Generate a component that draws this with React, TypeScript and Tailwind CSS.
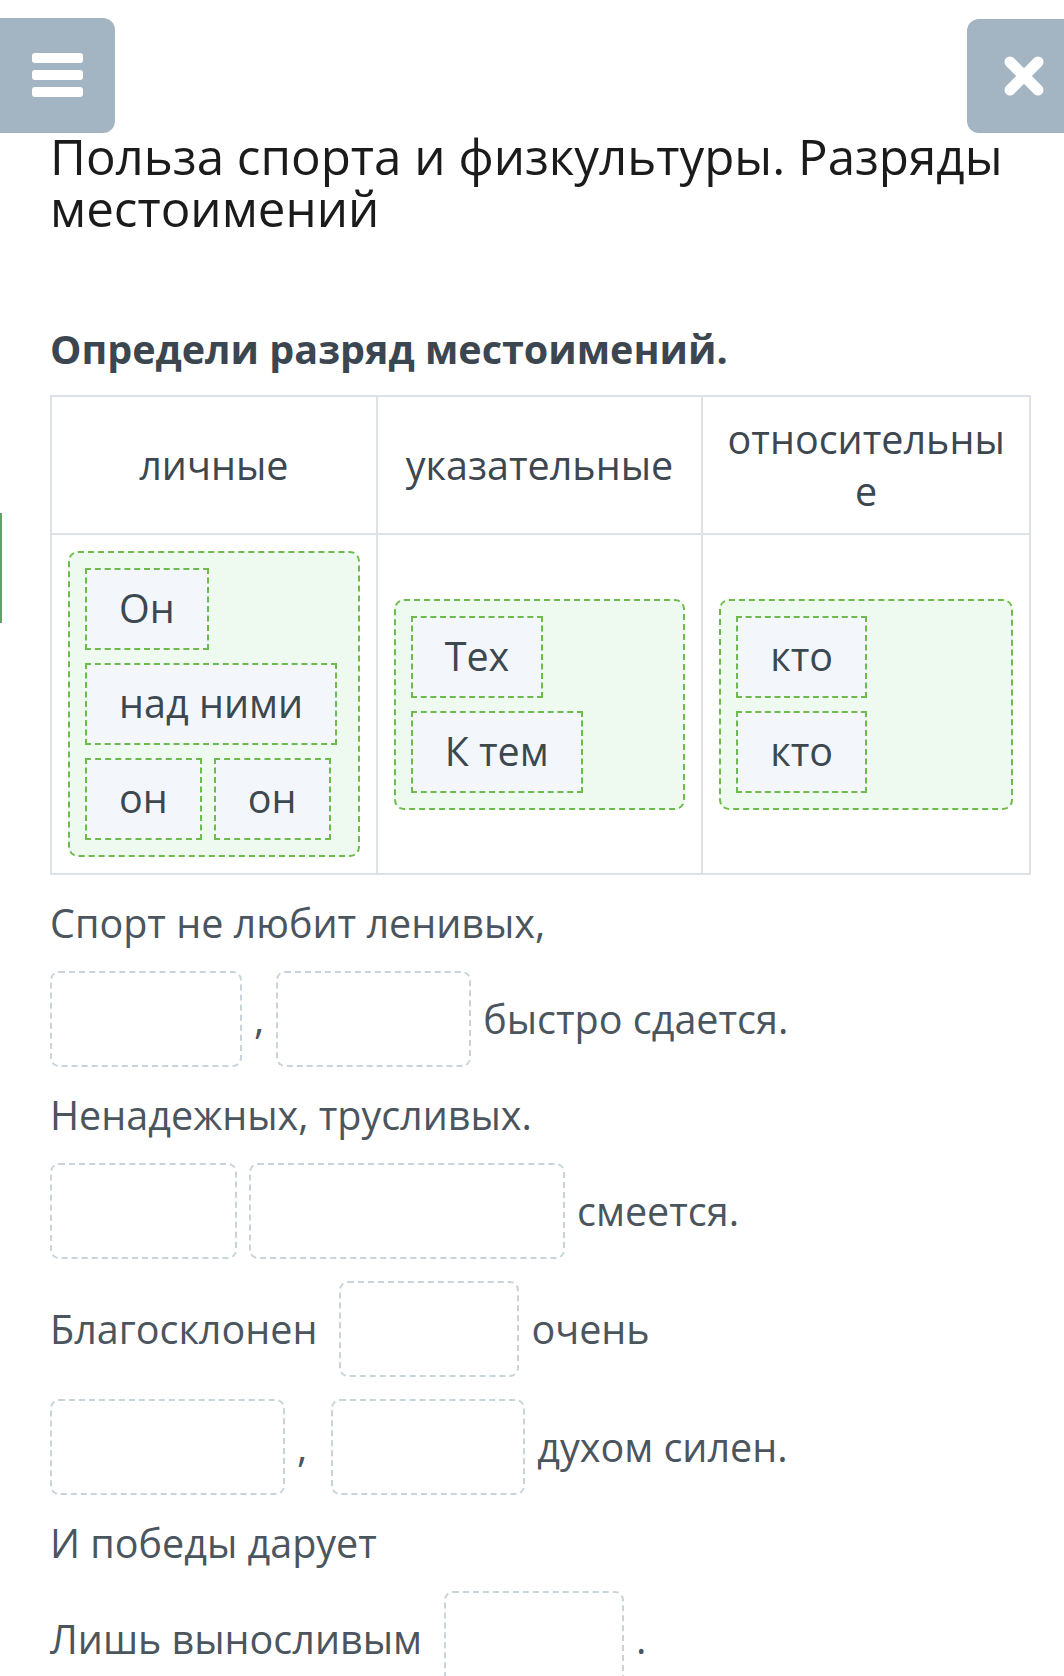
import React from 'react';

const Drop = ({ w }: { w: string }) => (
  <div className={`${w} h-[96px] shrink-0 rounded-[9px] border-2 border-dashed border-[#c8d4da] bg-white`} />
);

const Chip = ({ children }: { children: React.ReactNode }) => (
  <div className="flex h-[82px] items-center border-2 border-dashed border-[#6dbb4b] bg-[#f3f7fc] px-[32px] text-[39.5px] leading-none text-[#3d4750]">
    {children}
  </div>
);

const Group = ({ words }: { words: string[] }) => (
  <div className="flex w-full flex-wrap content-start gap-x-3 gap-y-[13px] rounded-[10px] border-2 border-dashed border-[#6dbb4b] bg-[#eef9ef] p-[15px]">
    {words.map((w, i) => (
      <Chip key={i}>{w}</Chip>
    ))}
  </div>
);

export default function App() {
  return (
    <div className="relative min-h-[1676px] w-full overflow-hidden bg-white font-['Open_Sans',sans-serif]">
      {/* floating buttons */}
      <button className="absolute left-0 top-[18px] flex h-[115px] w-[115px] items-start rounded-r-[12px] bg-[#a3b5c2] pl-[32px] pt-[35px]">
        <svg width="51" height="44" viewBox="0 0 51 44">
          <rect x="0" y="0" width="51" height="10" rx="3" fill="#fff" />
          <rect x="0" y="17" width="51" height="10" rx="3" fill="#fff" />
          <rect x="0" y="34" width="51" height="10" rx="3" fill="#fff" />
        </svg>
      </button>
      <button className="absolute right-0 top-[19px] flex h-[114px] w-[97px] items-start rounded-l-[12px] bg-[#a3b5c2] pl-[36px] pt-[36px]">
        <svg width="42" height="42" viewBox="0 0 42 42">
          <path d="M7 7 L35 35 M35 7 L7 35" stroke="#fff" strokeWidth="11" strokeLinecap="round" />
        </svg>
      </button>
      <div className="absolute left-0 top-[513px] h-[110px] w-[2px] bg-[#5aa56a]" />

      <div className="pl-[50px] pr-[33px] pt-[130px]">
        <h1 className="text-[49.3px] font-normal leading-[52px] text-[#1b1b1b]">
          Польза спорта и физкультуры. Разряды местоимений
        </h1>

        <h2 className="mt-[89px] text-[39.5px] font-bold leading-[52px] text-[#3c4650]">
          Определи разряд местоимений.
        </h2>

        {/* table */}
        <div className="mt-[20px] grid grid-cols-3 border-2 border-[#dce2e5] text-[#3d4750]">
          <div className="flex h-[138px] items-center justify-center border-b-2 border-r-2 border-[#dce2e5] text-center text-[39.5px] leading-[52px]">
            личные
          </div>
          <div className="flex h-[138px] items-center justify-center border-b-2 border-r-2 border-[#dce2e5] text-center text-[39.5px] leading-[52px]">
            указательные
          </div>
          <div className="flex h-[138px] items-center justify-center border-b-2 border-[#dce2e5] text-center text-[39.5px] leading-[52px]">
            относительны
            <br />е
          </div>
          <div className="flex items-center border-r-2 border-[#dce2e5] p-[16px]">
            <Group words={['Он', 'над ними', 'он', 'он']} />
          </div>
          <div className="flex items-center border-r-2 border-[#dce2e5] p-[16px]">
            <Group words={['Тех', 'К тем']} />
          </div>
          <div className="flex items-center p-[16px]">
            <Group words={['кто', 'кто']} />
          </div>
        </div>

        {/* poem with drop zones */}
        <div className="mt-[22px] flex flex-col gap-[22px] text-[39.5px] leading-[52px] text-[#4b555e]">
          <div>Спорт не любит ленивых,</div>
          <div className="flex items-center gap-x-3">
            <Drop w="w-[192px]" />
            <span>,</span>
            <Drop w="w-[195px]" />
            <span>быстро сдается.</span>
          </div>
          <div>Ненадежных, трусливых.</div>
          <div className="flex items-center gap-x-3">
            <Drop w="w-[187px]" />
            <Drop w="w-[316px]" />
            <span>смеется.</span>
          </div>
          <div className="flex items-center gap-x-3">
            <span className="mr-[10px]">Благосклонен</span>
            <Drop w="w-[180px]" />
            <span>очень</span>
          </div>
          <div className="flex items-center gap-x-3">
            <Drop w="w-[235px]" />
            <span className="mr-[12px]">,</span>
            <Drop w="w-[194px]" />
            <span>духом силен.</span>
          </div>
          <div>И победы дарует</div>
          <div className="flex items-center gap-x-3">
            <span className="mr-[10px]">Лишь выносливым</span>
            <Drop w="w-[180px]" />
            <span>.</span>
          </div>
        </div>
      </div>
    </div>
  );
}
